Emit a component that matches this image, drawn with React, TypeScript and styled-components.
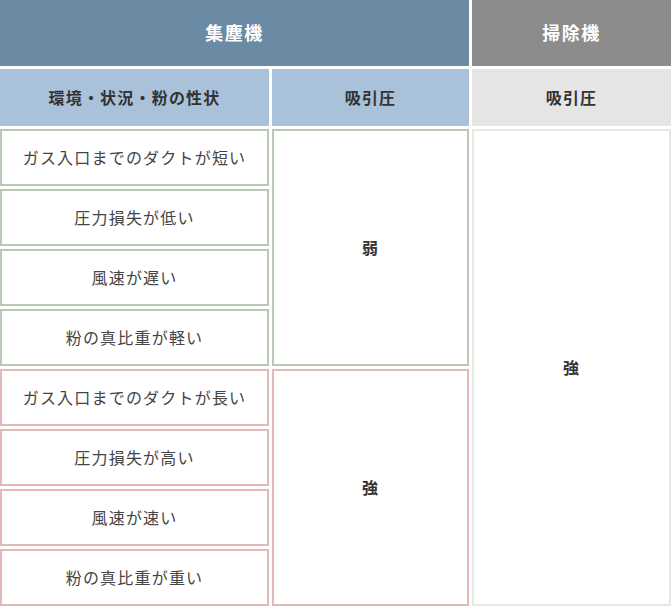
import React from "react";
import styled, { createGlobalStyle, css } from "styled-components";

const Global = createGlobalStyle`
  html, body { margin: 0; padding: 0; background: #ffffff; }
  body { font-family: "Noto Sans CJK JP", "Noto Sans", sans-serif; }
`;

const Table = styled.div`
  display: grid;
  width: 671px;
  grid-template-columns: 269px 197px 199px;
  grid-template-rows: 66px 57px repeat(8, 57px);
  gap: 3px;
`;

const TopHead = styled.div<{ $tone: "blue" | "gray"; $span?: number }>`
  grid-column: span ${(p) => p.$span ?? 1};
  display: flex;
  align-items: center;
  justify-content: center;
  padding-bottom: 2px;
  color: #ffffff;
  font-size: 18px;
  font-weight: 700;
  letter-spacing: 1.5px;
  background: ${(p) => (p.$tone === "blue" ? "#6b8ba5" : "#8c8c8c")};
`;

const SubHead = styled.div<{ $tone: "blue" | "gray" }>`
  display: flex;
  align-items: center;
  justify-content: center;
  padding-bottom: 2px;
  color: #333333;
  font-size: 16px;
  font-weight: 700;
  letter-spacing: 1.2px;
  background: ${(p) => (p.$tone === "blue" ? "#a9c1d9" : "#e5e5e5")};
`;

const tones = {
  green: "#b7c9b3",
  pink: "#e5b8b8",
  gray: "#e7e7e7",
};

const Cell = styled.div<{ $tone: keyof typeof tones; $rows?: number; $bold?: boolean }>`
  box-sizing: border-box;
  grid-row: span ${(p) => p.$rows ?? 1};
  display: flex;
  align-items: center;
  justify-content: center;
  padding-bottom: 2px;
  border: 2px solid ${(p) => tones[p.$tone]};
  background: #ffffff;
  color: #444444;
  font-size: 16px;
  letter-spacing: 1.2px;
  ${(p) =>
    p.$bold &&
    css`
      font-weight: 700;
      color: #333333;
    `}
`;

const weakConds = [
  "ガス入口までのダクトが短い",
  "圧力損失が低い",
  "風速が遅い",
  "粉の真比重が軽い",
];
const strongConds = [
  "ガス入口までのダクトが長い",
  "圧力損失が高い",
  "風速が速い",
  "粉の真比重が重い",
];

export default function App() {
  return (
    <>
      <Global />
      <Table>
        <TopHead $tone="blue" $span={2}>集塵機</TopHead>
        <TopHead $tone="gray">掃除機</TopHead>
        <SubHead $tone="blue">環境・状況・粉の性状</SubHead>
        <SubHead $tone="blue">吸引圧</SubHead>
        <SubHead $tone="gray">吸引圧</SubHead>

        <Cell $tone="green">{weakConds[0]}</Cell>
        <Cell $tone="green" $rows={4} $bold>弱</Cell>
        <Cell $tone="gray" $rows={8} $bold>強</Cell>
        {weakConds.slice(1).map((t) => (
          <Cell key={t} $tone="green">{t}</Cell>
        ))}
        <Cell $tone="pink">{strongConds[0]}</Cell>
        <Cell $tone="pink" $rows={4} $bold>強</Cell>
        {strongConds.slice(1).map((t) => (
          <Cell key={t} $tone="pink">{t}</Cell>
        ))}
      </Table>
    </>
  );
}
